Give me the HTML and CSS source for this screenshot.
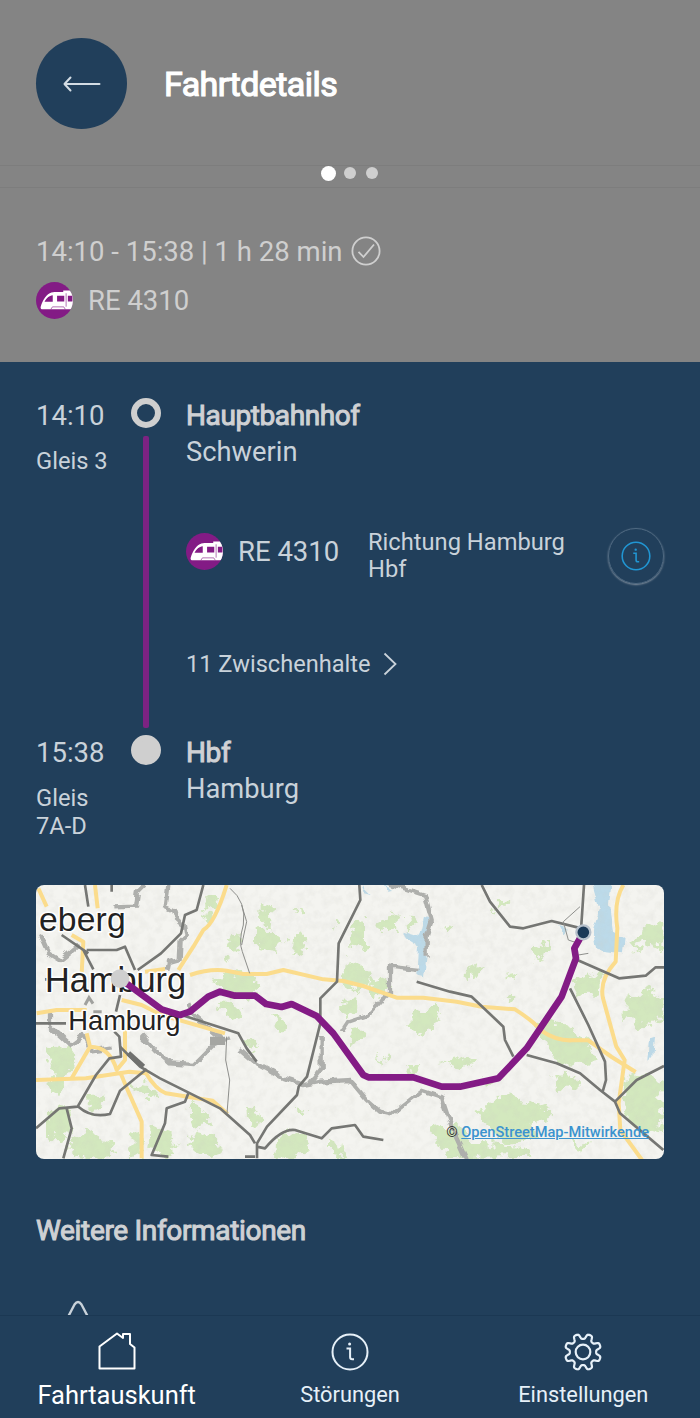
FILE: index.html
```
<!DOCTYPE html>
<html lang="de">
<head>
    <meta charset="UTF-8">
    <meta name="viewport" content="width=device-width, initial-scale=1.0">
    <title>Fahrtdetails</title>
    <link rel="stylesheet" href="styles.css">
</head>
<body>

    <svg class="defs" width="0" height="0">
        <symbol id="train" viewBox="0 0 36 36">
            <clipPath id="train-clip"><circle cx="18" cy="18" r="18"/></clipPath>
            <circle cx="18" cy="18" r="18" fill="#831b85"/>
            <g clip-path="url(#train-clip)">
                <path fill="#fff" d="M5.500 26.500c-1.100-.4-1.200-1.500-.8-2.800C6.500 17.500 10.500 11.300 15 10.200q1.500-.4 3-.4h8.500V8.300H36v18.200z"/>
                <path fill="#831b85" d="M8.300 19.200c1.800-3 4.500-6 8-6.200v6.200zM20.500 13.300h7v5.600h-7zM31 13.300h4.500v5.600H31z"/>
                <path fill="none" stroke="#831b85" stroke-width=".6" d="M14.500 26.500l1.500-2.300h11l1.500 2.300M29.300 11v13"/>
            </g>
        </symbol>
        <symbol id="info" viewBox="0 0 38 38">
            <g fill="none" stroke="currentColor" stroke-width="2">
                <circle cx="19" cy="19" r="17.500"/>
                <path d="M15.500 15.500h3.600v8.500q0 2.300 2.200 2.300h1.700"/>
            </g>
            <circle cx="18.600" cy="11" r="1.500" fill="currentColor"/>
        </symbol>
    </svg>

    <div class="screen">
        <header class="header">
            <div class="back">
                <svg width="38" height="16" viewBox="0 0 38 16" fill="none" stroke="#d3dce4" stroke-width="2" stroke-linecap="round" stroke-linejoin="round">
                    <path d="M36.500 8H1.500M7.500 1.500L1.500 8l6 6.500"/>
                </svg>
            </div>
            <h1 class="title">Fahrtdetails</h1>
        </header>

        <div class="pager">
            <span class="dot active"></span>
            <span class="dot"></span>
            <span class="dot"></span>
        </div>

        <section class="summary">
            <div class="summary-row">
                <span class="summary-time">14:10 - 15:38 | 1 h 28 min</span>
                <svg width="30" height="30" viewBox="0 0 30 30" fill="none" stroke="#cfcfcf" stroke-width="1.800">
                    <circle cx="15" cy="15" r="13.600"/>
                    <path d="M7.500 15.800l5 5.200L23 8.500"/>
                </svg>
            </div>
            <div class="summary-row line-row">
                <svg class="train"><use href="#train"/></svg>
                <span class="line-name">RE 4310</span>
            </div>
        </section>

        <main class="content">
            <div class="trip">
                <div class="times">
                    <div class="time">14:10</div>
                    <div class="platform">Gleis 3</div>
                </div>
                <div class="track">
                    <span class="stop-ring"></span>
                    <span class="track-line"></span>
                </div>
                <div class="stop">
                    <div class="stop-name">Hauptbahnhof</div>
                    <div class="stop-city">Schwerin</div>
                    <div class="leg">
                        <svg class="train"><use href="#train"/></svg>
                        <span class="line-name">RE 4310</span>
                        <span class="direction">Richtung Hamburg Hbf</span>
                        <div class="info-button">
                            <svg width="30" height="30"><use href="#info"/></svg>
                        </div>
                    </div>
                    <div class="stops-between">
                        <span>11 Zwischenhalte</span>
                        <svg width="14" height="24" viewBox="0 0 14 24" fill="none" stroke="#c9d2da" stroke-width="1.800">
                            <path d="M1.500 1.500L12.500 12 1.500 22.500"/>
                        </svg>
                    </div>
                </div>
            </div>

            <div class="trip arrival">
                <div class="times">
                    <div class="time">15:38</div>
                    <div class="platform">Gleis 7A-D</div>
                </div>
                <div class="track">
                    <span class="stop-ring full"></span>
                </div>
                <div class="stop">
                    <div class="stop-name">Hbf</div>
                    <div class="stop-city">Hamburg</div>
                </div>
            </div>

            <div class="map">
                <svg width="628" height="274" viewBox="18 15 1884 822" preserveAspectRatio="none">
                    <defs>
                        <filter id="rough" x="0" y="0" width="100%" height="100%">
                            <feTurbulence type="fractalNoise" baseFrequency=".03" numOctaves="4" seed="4"/>
                            <feDisplacementMap in="SourceGraphic" scale="60" xChannelSelector="R" yChannelSelector="G"/>
                        </filter>
                        <filter id="jagged" filterUnits="userSpaceOnUse" x="18" y="15" width="1884" height="822">
                            <feTurbulence type="fractalNoise" baseFrequency=".04" numOctaves="1" seed="2"/>
                            <feDisplacementMap in="SourceGraphic" scale="22" xChannelSelector="R" yChannelSelector="G"/>
                        </filter>
                        <filter id="relief" x="0" y="0" width="100%" height="100%">
                            <feTurbulence type="fractalNoise" baseFrequency=".04" numOctaves="3" seed="9"/>
                            <feColorMatrix values="0 0 0 0 .6  0 0 0 0 .6  0 0 0 0 .55  .9 0 0 0 -.36"/>
                        </filter>
                    </defs>
                    <rect x="18" y="15" width="1884" height="822" fill="#f4f4f0"/>

                    <!-- forest -->
                    <g fill="#d3e8be" filter="url(#rough)">
                        <path d="M65 500l60 10 15 45-35 40-20 50-25-10 5-55-10-40z"/>
                        <path d="M55 690l45-15 25 35-10 55-40 20-25-30z"/>
                        <path d="M115 790l60-40 60 35 20 40-60 12-80-12z"/>
                        <path d="M300 750l30 5 12 75-45 5zM310 610l50 5 25 35-45 5zM360 735l60 20 20 60-50 20-35-40z"/>
                        <path d="M470 665l50 15 20 50-45 15zM485 755l60 15 25 40-60 20-35-30z"/>
                        <path d="M180 645l40 5-5 40-40-5zM530 45l30 10-5 30-30-5zM515 95l35 10-20 25zM590 180l40-20-10 60-25 15z"/>
                        <path d="M555 300l70-30 60 35-10 45-80 10zM560 370l50-5 30 40-50 10z"/>
                        <path d="M675 155l50-5 40 30-30 30-60-10zM690 75l30 5-5 60-30-20zM790 170l30-20 15 40-50 35zM800 80l20 5-15 25z"/>
                        <path d="M975 110l30 15v75l-35 10-15-50zM950 240l50 15 20 40-50 45-25-40zM1040 130l50-30 20 20-50 40zM905 115l25 5-15 25z"/>
                        <path d="M935 360l40-10 20 25-40 40-25-30zM960 450l50-5-5 40-40 10zM720 400l40 10 15 40-25 5zM650 485l25 5-10 20z"/>
                        <path d="M1010 305l60-10 15 30-60 20zM1145 400l70-25 15 30-30 50-45 15-20-30zM1130 110l25 15-20 20zM1245 130l25 15-20 20z"/>
                        <path d="M1040 520l30 15-20 25zM1120 560l45-15-5 30zM1230 545l80-15 20 15-50 20z"/>
                        <path d="M650 680l40 15-10 50-25-20zM800 680l25 5-5 20zM740 770l60-20 40 30-15 45-90 10zM900 785l30 5 10 45-40-5z"/>
                        <path d="M1195 750l70-15 90 60 120 5 30 30-250 5-30-40z"/>
                        <path d="M1340 690l70-40 100 15 60 40-70 30 20 40-90 20-40-40z"/>
                        <path d="M1510 435l80-15 80 60 30 60-80 20-60-35zM1570 580l60 5 10 40-60-5zM1350 600l70 5-50 15z"/>
                        <path d="M1625 300l60-20 40 15-20 50-60-5zM1510 210l50-25-10 40-30 20zM1310 270l50-15-40 50zM1405 50l35 15-40 35zM1430 285l45-10-20 25z"/>
                        <path d="M1790 350l70-20 40 25v60l-60 30-50-30zM1840 150l60-30v90l-50-20-50 30z"/>
                        <path d="M1790 600l50-20 60 20v140l-60 20-60-60zM1420 345l35 5-15 15zM1620 780l60 10-30 25z"/>
                    </g>
                    <!-- lakes -->
                    <g fill="#bcdae9" filter="url(#jagged)">
                        <path d="M1685 5h60l-8 70 12 80 35 20-5 45-80-10-10-60 20-60z"/>
                        <path d="M1120 155l50 15 15-60 14 5-5 80-12 100-20-5 5-90-40-25zM995 15l30 30-20-5zM1060 15l30 15-18 2z"/>
                        <path d="M1860 475l15-5-5 60-15 15zM1588 138l26 8-14 14z"/>
                    </g>
                    <rect x="18" y="15" width="1884" height="822" filter="url(#relief)" opacity=".45"/>

                    <!-- borders -->
                    <g fill="none" stroke="#aeafac" stroke-width="13" filter="url(#jagged)">
                        <path d="M415 15l-8 65 25 12 8 25 22 20 5 30-15 15-3 55-35 10-5 25"/>
                        <path d="M250 82l68-2 6-45 20-20M30 165l25 55 35 22 60-50"/>
                        <path d="M60 395v45l60 55 40-30 25 50 60-10"/>
                        <path d="M335 465l40 45 45 40 70 5 60-60 50-20M475 370l15 35 90 75"/>
                        <path d="M630 510l40 35 90 50 60 20 50-10 90-5 50 60 40 35 35 8 90-70 60 20 30 90 55 120"/>
                        <path d="M875 465v100l-35 45M935 455l20-30 60-20 45-50 20-15 0-80 85 10M1190 230v-60l15-50-20-75-60-20-65-20"/>
                    </g>
                    <path d="M540 470h45v25h-45z" fill="#a5a6a2"/>
                    <path d="M165 375l12-22 12 18M190 395h25" fill="none" stroke="#a0a19e" stroke-width="9"/>

                    <!-- motorways -->
                    <g fill="none" stroke="#fbdc8c" stroke-width="12" stroke-linejoin="round">
                        <path d="M25 25l25 55M195 15l8 70M590 15q-35 115-70 135l-30 50-45 70"/>
                        <path d="M345 275l60-8M480 285q60-20 110-13l50 10h70l50-12 120 28 60 5 60 15 100 35h80l100 12 75 15 100 8q55 35 80 65 45 30 90 28h50l70 50 72 45"/>
                        <path d="M18 600l150-5 130-20 50 5q30 50 60 60l140 22 45 40"/>
                        <path d="M20 400l60-10h90M125 165l35 20-5 95M170 460l10 40-55 95M180 500q60 0 80 70l25-30 0-95M270 575l25 60 40 90v110M275 360l60 15 60 30 120 35 70 20"/>
                        <path d="M1780 15q-30 50-18 130l-5 100q-50 55-38 110l40 145 25 40-18 130 5 80 65 90"/>
                    </g>

                    <!-- railways -->
                    <g fill="none" stroke="#757673" stroke-width="8" stroke-linejoin="round">
                        <path d="M520 15l-20 75-35 15-12 55-60 60-70 50M165 15l10 65M245 15v20"/>
                        <path d="M95 165l80 55M170 210l90 0 25-10 30 70M160 210l30 58M18 430h90M45 298h60"/>
                        <path d="M18 745l70-60 55-5 55-95 40-50 35-5-5-60-15-15M110 685l15 60-25 90M145 680q40 35 95 22l30-70 80-65"/>
                        <path d="M270 500l60 60 60 35 80 40 100 50 90 80 15 25"/>
                        <path d="M475 640l-10 25-55 20-5 45-40 95 50 5M270 345l-12 50M455 405l170 55 25 45 30 40"/>
                        <path d="M988 15l3 45-65 130-5 115-50 50v75l-20 80-20 80-25 30-5 25-90 95-30 50v45M645 830h30M680 800l25 5q50-60 90-55l80 25 30-30 70-10 25 35 60 10"/>
                        <path d="M1160 305l100 30 65 15 95 90 5 40 25 50"/>
                        <path d="M1355 15l25 50 60 75 40 5 85-22 80 20M1662 15l-8 120M1642 240l125 55 80-8 30-25h25"/>
                        <path d="M1620 325l55 110 50 110 3 55-10 35M1490 525l90 25 70 30 60 50 45 35 15 35 130 110M1755 665l65-65 82-42"/>
                    </g>
                    <path d="M295 520l45 40" stroke="#70716f" stroke-width="16"/>
                    <path d="M600 25q50 40 40 110-15 50-3 80l22 65M590 470l-3 70 12 60-8 100M635 75l15 50-15 70M1650 80l-50 45 15 55 30 10M1645 225l30-5" fill="none" stroke="#8d8e8b" stroke-width="3"/>

                    <g class="map-labels">
                        <text x="27" y="152" font-size="101" textLength="260">eberg</text>
                        <text x="45" y="337" font-size="103" textLength="423">Hamburg</text>
                        <text x="115" y="450" font-size="82" textLength="336">Hamburg</text>
                    </g>

                    <!-- route -->
                    <path d="M270 296L395 388 450 405 480 395 535 350 570 335 615 347 675 347 708 372 755 381 785 372 860 408 910 460 1000 585 1015 592 1150 592 1235 620 1290 620 1405 595 1490 505 1595 350 1638 235 1633 205 1660 157" fill="none" stroke="#831b85" stroke-width="20" stroke-linejoin="round"/>
                    <circle cx="270" cy="296" r="28" fill="#cfcfcf"/>
                    <circle cx="1660" cy="157" r="21" fill="#1b3a57" stroke="#b7c1cb" stroke-width="7"/>
                </svg>
                <div class="attribution">© <a>OpenStreetMap-Mitwirkende</a></div>
            </div>

            <h2 class="more">Weitere Informationen</h2>
            <svg class="peek" width="22" height="24" viewBox="0 0 22 24" fill="none" stroke="#c9d2da" stroke-width="2.400">
                <path d="M1.500 16L7.500 4.500Q11-.5 14.500 4.500L20.500 16"/>
            </svg>
        </main>

        <nav class="nav">
            <div class="nav-item current">
                <svg width="40" height="40" viewBox="0 0 40 40" fill="none" stroke="#fff" stroke-width="2" stroke-linejoin="round">
                    <path d="M2.500 15.500L20 2.500l6 4.500V3h7v10l4.500 3.500V37.500h-35z"/>
                </svg>
                <span>Fahrtauskunft</span>
            </div>
            <div class="nav-item">
                <svg width="38" height="38"><use href="#info"/></svg>
                <span>Störungen</span>
            </div>
            <div class="nav-item">
                <svg width="38" height="38" viewBox="-19 -19 38 38" fill="none" stroke="#e6f0f8" stroke-width="2.200" stroke-linejoin="round">
                    <circle r="7.300"/>
                    <path id="gear" d=""/>
                </svg>
                <span>Einstellungen</span>
            </div>
        </nav>
    </div>

    <script>
        // gear outline with eight rounded teeth
        const points = [];
        for (let i = 0; i < 180; i++) {
            const angle = i * 2 * Math.PI / 180;
            const wave = Math.cos(8 * (angle - Math.PI / 8));
            const radius = 15.7 + 2.6 * Math.tanh(2.2 * wave);
            points.push((radius * Math.cos(angle)).toFixed(2) + ' ' + (radius * Math.sin(angle)).toFixed(2));
        }
        document.getElementById('gear').setAttribute('d', 'M' + points.join('L') + 'Z');
    </script>

</body>
</html>
```
FILE: styles.css
```
* {
    box-sizing: border-box;
}

body {
    margin: 0;
    background-color: #213f5b;
    font-family: Roboto, "Liberation Sans", sans-serif;
    color: #c9d2da;
}

.defs {
    position: absolute;
}

.screen {
    width: 700px;
    height: 1418px;
    display: flex;
    flex-direction: column;
    overflow: hidden;
}

.header {
    height: 165px;
    padding: 38px 36px 0;
    display: flex;
    align-items: flex-start;
    gap: 37px;
    background-color: #848484;
}

.back {
    width: 91px;
    height: 91px;
    border-radius: 50%;
    background-color: #213f5b;
    display: flex;
    justify-content: center;
    align-items: center;
}

.title {
    margin: 0;
    line-height: 92px;
    font-size: 34px;
    font-weight: 400;
    letter-spacing: -0.55px;
    color: #fff;
    -webkit-text-stroke: 1.2px #fff;
}

.pager {
    height: 23px;
    padding-bottom: 7px;
    border-top: 1px solid #7d7d7d;
    border-bottom: 1px solid #7d7d7d;
    background-color: #848484;
    display: flex;
    justify-content: center;
    align-items: center;
    gap: 10px;
}

.dot {
    width: 12px;
    height: 12px;
    border-radius: 50%;
    background-color: #cfcfcf;
}

.dot.active {
    width: 15px;
    height: 15px;
    margin: 0 -1.5px;
    background-color: #fff;
}

.summary {
    height: 174px;
    padding: 45px 36px 0;
    background-color: #848484;
    color: #cfcfcf;
}

.summary-row {
    height: 36px;
    display: flex;
    align-items: center;
    gap: 8px;
}

.summary-time,
.time,
.line-name {
    font-size: 27.5px;
    white-space: nowrap;
}

.line-row {
    margin-top: 13px;
    gap: 15px;
}

.train {
    width: 37px;
    height: 37px;
    flex: none;
}

.content {
    flex: 1;
    min-height: 0;
    padding: 34px 36px 0;
    overflow: hidden;
}

.trip {
    height: 337px;
    display: flex;
}

.trip.arrival {
    height: 152px;
}

.times {
    width: 88px;
    padding-top: 1px;
}

.time {
    line-height: 38px;
}

.platform {
    width: 76px;
    margin-top: 12px;
    font-size: 23.7px;
    line-height: 28px;
}

.track {
    width: 44px;
    padding-top: 2px;
    display: flex;
    flex-direction: column;
    align-items: center;
}

.stop-ring {
    width: 30px;
    height: 30px;
    flex: none;
    border: 6px solid #cfcfcf;
    border-radius: 50%;
}

.stop-ring.full {
    background-color: #cfcfcf;
}

.track-line {
    width: 6px;
    height: 292px;
    margin-top: 8px;
    border-radius: 2px;
    background-color: #7c2382;
}

.stop {
    flex: 1;
    padding: 1px 0 0 18px;
}

.stop-name {
    font-size: 28px;
    line-height: 38px;
    letter-spacing: -0.4px;
    color: #cfd1d4;
    -webkit-text-stroke: 1px #cfd1d4;
}

.stop-city {
    font-size: 27.3px;
    line-height: 34px;
}

.leg {
    height: 60px;
    margin-top: 60px;
    display: flex;
    align-items: flex-start;
}

.leg .train {
    margin-top: 4px;
}

.leg .line-name {
    width: 130px;
    margin-left: 15px;
    line-height: 46px;
}

.direction {
    width: 215px;
    font-size: 23.7px;
    line-height: 27px;
}

.info-button {
    width: 56px;
    height: 56px;
    margin: -1px 0 0 25px;
    flex: none;
    border: 1px solid #506a82;
    border-radius: 50%;
    box-shadow: 0 1px 2px #8592a0;
    color: #2196d3;
    display: flex;
    justify-content: center;
    align-items: center;
}

.stops-between {
    margin-top: 61px;
    display: flex;
    align-items: center;
    gap: 12px;
    font-size: 23.6px;
    line-height: 28px;
}

.map {
    position: relative;
    width: 628px;
    height: 274px;
    border-radius: 8px;
    overflow: hidden;
}

.map svg {
    display: block;
}

.map-labels {
    font-family: "Liberation Sans", Arial, sans-serif;
    fill: #222;
    stroke: #fff;
    stroke-width: 9px;
    stroke-linejoin: round;
    paint-order: stroke;
}

.attribution {
    position: absolute;
    right: 15px;
    bottom: 18px;
    font-size: 14.6px;
    line-height: 18px;
    color: #333;
    white-space: nowrap;
}

.attribution a {
    color: #3b93cf;
    font-weight: 500;
    text-decoration: underline;
}

.more {
    margin: 54px 0 0;
    font-size: 28px;
    font-weight: 400;
    line-height: 36px;
    letter-spacing: -0.33px;
    color: #cfd1d4;
    -webkit-text-stroke: 1px #cfd1d4;
}

.peek {
    display: block;
    margin: 51px 0 0 31px;
}

.nav {
    height: 103px;
    border-top: 1px solid #1b3853;
    background-color: #213f5b;
    display: grid;
    grid-template-columns: repeat(3, 1fr);
    color: #e6f0f8;
}

.nav-item {
    display: flex;
    flex-direction: column;
    align-items: center;
    padding-top: 17px;
    font-size: 21.8px;
    line-height: 28px;
}

.nav-item svg {
    flex: none;
    margin-bottom: 10px;
}

.nav-item.current {
    padding-top: 15px;
    font-size: 25.5px;
    color: #fff;
}
```
